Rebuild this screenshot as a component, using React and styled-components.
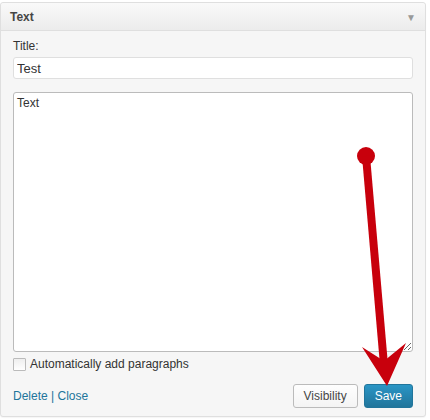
import React from 'react';
import styled, { createGlobalStyle } from 'styled-components';

const GlobalStyle = createGlobalStyle`
  html, body {
    margin: 0;
    padding: 0;
    background: #ffffff;
    font-family: Arial, "Liberation Sans", sans-serif;
  }
`;

const Page = styled.div`
  position: relative;
  width: 430px;
  height: 420px;
  padding-top: 2px;
  box-sizing: border-box;
  overflow: hidden;
`;

const Widget = styled.div`
  width: 426px;
  height: 415px;
  box-sizing: border-box;
  border: 1px solid #dfdfdf;
  border-radius: 3px;
  background: #f6f6f6;
  box-shadow: 0 1px 1px rgba(0, 0, 0, 0.04);
  display: flex;
  flex-direction: column;
`;

const Header = styled.div`
  height: 28px;
  flex: 0 0 auto;
  box-sizing: border-box;
  display: flex;
  align-items: center;
  justify-content: space-between;
  padding: 0 9px 0 9px;
  background: linear-gradient(to bottom, #f9f9f9, #ececec);
  border-bottom: 1px solid #dfdfdf;
  border-radius: 3px 3px 0 0;
`;

const HeaderTitle = styled.h3`
  margin: 0;
  font-size: 12px;
  font-weight: bold;
  color: #464646;
`;

const Toggle = styled.span`
  font-size: 10px;
  color: #999999;
  margin-top: 1px;
`;

const Body = styled.div`
  flex: 1;
  display: flex;
  flex-direction: column;
  padding: 8px 12px 0 12px;
`;

const Label = styled.label`
  font-size: 12px;
  color: #333333;
  line-height: 15px;
  margin-bottom: 3px;
`;

const TitleInput = styled.input`
  width: 100%;
  height: 22px;
  box-sizing: border-box;
  border: 1px solid #dfdfdf;
  border-radius: 3px;
  background: #ffffff;
  padding: 0 3px;
  font-family: Arial, "Liberation Sans", sans-serif;
  font-size: 13px;
  color: #333333;
  outline: none;
`;

const TextArea = styled.textarea`
  margin-top: 13px;
  width: 100%;
  height: 260px;
  box-sizing: border-box;
  border: 1px solid #bbbbbb;
  border-radius: 3px;
  background: #ffffff;
  padding: 3px 3px;
  font-family: Arial, "Liberation Sans", sans-serif;
  font-size: 12px;
  color: #333333;
  resize: vertical;
  outline: none;
  display: block;
`;

const CheckRow = styled.label`
  display: flex;
  align-items: center;
  gap: 4px;
  margin-top: 5px;
  font-size: 12px;
  color: #333333;
`;

const Box = styled.span`
  width: 13px;
  height: 13px;
  box-sizing: border-box;
  border: 1px solid #bbbbbb;
  background: linear-gradient(to bottom, #eeeeee, #ffffff);
  border-radius: 1px;
`;

const Footer = styled.div`
  display: flex;
  align-items: center;
  justify-content: space-between;
  margin-top: 13px;
`;

const Links = styled.div`
  font-size: 12px;
  color: #21759b;
`;

const Link = styled.a`
  color: #21759b;
  text-decoration: none;
`;

const Buttons = styled.div`
  display: flex;
  gap: 6px;
`;

const Button = styled.button`
  height: 24px;
  box-sizing: border-box;
  padding: 0 10px;
  border-radius: 3px;
  font-family: Arial, "Liberation Sans", sans-serif;
  font-size: 12px;
  cursor: pointer;
  border: 1px solid ${p => (p.$primary ? '#21759b' : '#bbbbbb')};
  color: ${p => (p.$primary ? '#ffffff' : '#464646')};
  background: ${p =>
    p.$primary
      ? 'linear-gradient(to bottom, #2a95c5, #21759b)'
      : 'linear-gradient(to bottom, #fefefe, #f4f4f4)'};
`;

const Overlay = styled.svg`
  position: absolute;
  left: 0;
  top: 0;
  pointer-events: none;
`;

export default function App() {
  return (
    <Page>
      <GlobalStyle />
      <Widget>
        <Header>
          <HeaderTitle>Text</HeaderTitle>
          <Toggle>▼</Toggle>
        </Header>
        <Body>
          <Label>Title:</Label>
          <TitleInput defaultValue="Test" />
          <TextArea defaultValue="Text" />
          <CheckRow>
            <Box />
            Automatically add paragraphs
          </CheckRow>
          <Footer>
            <Links>
              <Link href="#">Delete</Link> | <Link href="#">Close</Link>
            </Links>
            <Buttons>
              <Button>Visibility</Button>
              <Button $primary>Save</Button>
            </Buttons>
          </Footer>
        </Body>
      </Widget>
      <Overlay width="430" height="420" viewBox="0 0 430 420">
        <circle cx="366" cy="156" r="9" fill="#c8000c" />
        <line x1="366" y1="156" x2="384" y2="365" stroke="#c8000c" strokeWidth="8" />
        <polygon points="387,386 362,347 384,361 406,343" fill="#c8000c" />
      </Overlay>
    </Page>
  );
}
